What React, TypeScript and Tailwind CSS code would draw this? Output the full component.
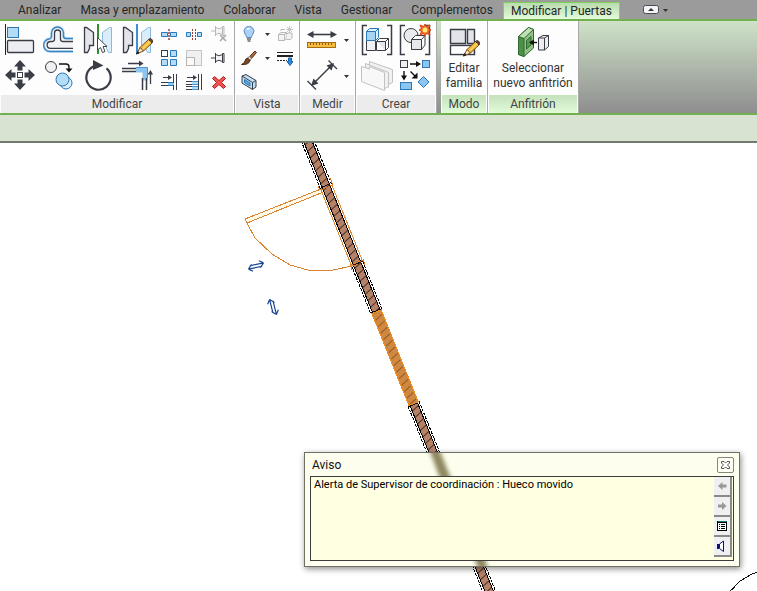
import React from "react";
import clsx from "clsx";

const INK = "#3a3d45";
const BLUE = "#2b78b8";
const SKY = "#b4dcf6";
const GRAY = "#b9b9b9";

const Icon32 = ({ children }: { children: React.ReactNode }) => (
  <svg width="32" height="32" viewBox="0 0 32 32" fill="none" stroke={INK} aria-hidden="true">
    {children}
  </svg>
);

const Icon16 = ({ children }: { children: React.ReactNode }) => (
  <svg width="16" height="16" viewBox="0 0 16 16" fill="none" stroke={INK} aria-hidden="true">
    {children}
  </svg>
);

const Pencil = () => (
  <g stroke="#7a4a1c" strokeWidth="1">
    <path d="M19 23.5 27.5 15.5 31 19 22.5 27Z" fill="#f5bf35" />
    <path d="M27.5 15.5 29 14.5Q32 15 31.5 18L31 19Z" fill="#6b4a3a" stroke="#4a3428" />
    <path d="M21 25.5 29 17.5" stroke="#fde58a" />
    <path d="M19 23.5 15.5 30 22.5 27Z" fill="#fbe6c4" />
    <path d="M15.5 30 16.8 27.5 18 29Z" fill="#222" stroke="#222" />
  </g>
);

const MirrorHalves = ({ axis }: { axis: string }) => (
  <>
    <path d="M2.5 3.5H4.5L11.5 8.5V21.5H7.5V24.5L5.5 28.5H2.5Z" fill="#e3e5ea" strokeWidth="1.3" />
    <path d="M29.5 3.5H27.5L20.5 8.5V21.5H24.5V24.5L26.5 28.5H29.5Z" fill="#d9edfa" stroke="#8ab9dc" />
    <path d="M16 0V30" stroke={axis} strokeWidth="2" />
  </>
);

const Align = () => (
  <Icon32>
    <path d="M1.5 0V31" stroke="#222" />
    <rect x="3.5" y="3.5" width="11" height="10" fill={SKY} stroke={BLUE} />
    <rect x="3.5" y="16.5" width="26" height="12" rx="1" fill="#eceef1" strokeWidth="1.3" />
  </Icon32>
);

const Offset = () => (
  <Icon32>
    <path
      d="M30 14.5H23Q20.5 14.5 20.5 12V9A6 6 0 0 0 8.5 9V12Q8.5 14.5 7 14.8A6.2 6.2 0 0 0 7 27.5H30"
      stroke="#cfe6f7"
      strokeWidth="3"
    />
    <path
      d="M30 14.5H23Q20.5 14.5 20.5 12V9A6 6 0 0 0 8.5 9V12Q8.5 14.5 7 14.8A6.2 6.2 0 0 0 7 27.5H30"
      stroke="#3c83c0"
      strokeWidth="1.4"
    />
    <path
      d="M30 17.5H20Q17.5 17.5 17.5 15V9A3 3 0 0 0 11.5 9V15Q11.5 17.5 9 17.5H7.5A3.4 3.4 0 0 0 7.5 24.3H30"
      fill="#f3f3f5"
      strokeWidth="1.3"
    />
  </Icon32>
);

const MirrorPick = () => (
  <Icon32>
    <MirrorHalves axis="#2f8f35" />
    <path d="M15.5 13.5V26L18.5 23.5 20.5 28.5 23 27.5 21 22.5H25Z" fill="#fff" stroke="#444" />
  </Icon32>
);

const MirrorDraw = () => (
  <Icon32>
    <MirrorHalves axis="#3f8fd6" />
    <Pencil />
  </Icon32>
);

const Move = () => (
  <Icon32>
    <g fill={INK} stroke="none">
      <path d="M16 0 22 6.5H18.5V10.5H13.5V6.5H10Z" />
      <path d="M16 30 22 23.5H18.5V19.5H13.5V23.5H10Z" />
      <path d="M1 15 7.5 9V12.5H11.5V17.5H7.5V21Z" />
      <path d="M31 15 24.5 9V12.5H20.5V17.5H24.5V21Z" />
    </g>
    <rect x="13.5" y="12.5" width="5" height="5" fill="#fff" />
  </Icon32>
);

const Copy = () => (
  <Icon32>
    <circle cx="8" cy="7" r="5.5" fill="#f1f1f3" />
    <path d="M16 4H23Q26 4 26 7V9" stroke="#111" strokeWidth="1.4" />
    <path d="M22.5 8.5H29.5L26 12.5Z" fill="#111" stroke="none" />
    <circle cx="23" cy="23" r="6" fill="#d8effb" stroke={BLUE} />
    <circle cx="19.5" cy="19.5" r="6.5" fill={SKY} stroke={BLUE} />
  </Icon32>
);

const Rotate = () => (
  <Icon32>
    <path d="M24.5 8.3A12.2 12.2 0 1 1 12 6.2" strokeWidth="2.2" />
    <path d="M11 0 21.5 5.5 11 10Z" fill={INK} stroke="none" />
  </Icon32>
);

const Trim = () => (
  <Icon32>
    <path d="M15 7.5H26.5V20.5H21.5V12.5H15Z" fill="#8cc6f0" stroke="none" />
    <path d="M15 7.5H26.5V18" stroke="#4b95cf" />
    <path d="M1 8.5H15M1 11.5H15M21.5 18V30M25.5 18V30" strokeWidth="1.5" />
    <path d="M7 3.5H19M29.5 24V14" strokeWidth="1.3" />
    <path d="M18 0.5 22.5 3.5 18 6.5ZM26.5 14.5 29.5 10 32 14.5Z" fill={INK} stroke="none" />
  </Icon32>
);

const Split = () => (
  <Icon16>
    <path d="M0.5 6.5H6.5V10.5H0.5ZM9.5 6.5H15.5V10.5H9.5Z" fill={SKY} stroke={BLUE} />
    <path d="M8 3V14" stroke="#a33a35" strokeWidth="1.5" strokeDasharray="2 1" />
  </Icon16>
);

const SplitGap = () => (
  <Icon16>
    <path d="M0.5 6.5H4.5V10.5H0.5ZM11.5 6.5H15.5V10.5H11.5Z" fill={SKY} stroke={BLUE} />
    <path d="M6.5 3V14M9.5 3V14" stroke="#a33a35" strokeDasharray="2 1" />
  </Icon16>
);

const PinShape = () => (
  <path
    d="M0 8H4.5M4.5 3V13M4.5 4.5Q8 7 11.5 4.5V11.5Q8 9 4.5 11.5M11.5 3.5H13V12.5H11.5Z"
    fill="#f4f4f4"
  />
);

const Unpin = () => (
  <Icon16>
    <g stroke={GRAY}>
      <g transform="translate(0 -3)">
        <PinShape />
      </g>
      <path d="M9 9 15 15M15 9 9 15" stroke="#a8a8a8" strokeWidth="1.5" />
    </g>
  </Icon16>
);

const Pin = () => (
  <Icon16>
    <PinShape />
  </Icon16>
);

const ArrayIcon = () => (
  <Icon16>
    <rect x="0.5" y="0.5" width="6" height="6" fill="#fff" />
    <path d="M9.5 0.5H15.5V6.5H9.5ZM0.5 9.5H6.5V15.5H0.5ZM9.5 9.5H15.5V15.5H9.5Z" fill={SKY} stroke={BLUE} />
  </Icon16>
);

const Scale = () => (
  <Icon16>
    <rect x="0.5" y="0.5" width="15" height="15" fill="#f0f0f0" stroke="#c4c4c4" />
    <rect x="0.5" y="7.5" width="8" height="8" fill="#fafafa" stroke="#b4b4b4" />
  </Icon16>
);

const ExtendOne = () => (
  <Icon16>
    <path d="M2 3.5H8M0 8.5H7M0 11.5H7M12.5 0V16M15.5 0V16" />
    <path d="M7 1 11 3.5 7 6Z" fill={INK} stroke="none" />
    <path d="M7 8.5H12M7 11.5H12" stroke={BLUE} />
    <path d="M7 10H13" stroke="#8cc6f0" strokeWidth="2" />
  </Icon16>
);

const ExtendMany = () => (
  <Icon16>
    <path d="M1 3.5H8M0 7.5H6M0 10.5H6M0 12.5H6M0 15.5H6M12.5 0V16M15.5 0V16" />
    <path d="M7 1 11 3.5 7 6Z" fill={INK} stroke="none" />
    <path d="M6 7.5H12M6 10.5H12M6 12.5H12M6 15.5H12" stroke="#4b95cf" />
    <path d="M6 9H12M6 14H12" stroke="#b4dcf6" strokeWidth="2" />
  </Icon16>
);

const Delete = () => (
  <Icon16>
    <path
      d="M3.5 2.5 8 6.5 12.5 2.5 14.5 4.5 10.5 8.5 14.5 12.5 12.5 14.5 8 10.5 3.5 14.5 1.5 12.5 5.5 8.5 1.5 4.5Z"
      fill="#ee5350"
      stroke="#b21f1f"
    />
  </Icon16>
);

const Bulb = () => (
  <Icon16>
    <path d="M5.5 11.5Q5.5 9.5 4 8A4.9 4.9 0 1 1 12 8Q10.5 9.5 10.5 11.5Z" fill="#a9d0f7" stroke="#5f8fc4" />
    <path d="M6 3.5Q7 2.5 8.5 3" stroke="#fff" strokeWidth="1.5" />
    <path d="M6 13H10M6.5 15H9.5" stroke="#666" strokeWidth="1.5" />
  </Icon16>
);

const Brush = () => (
  <Icon16>
    <path d="M8.5 6.5 14 1 15.5 2.5 10.5 8.5Z" fill="#a9683a" stroke="#63351c" />
    <path d="M6.5 8 8.5 6.5 10.5 8.5 9 10.5Z" fill="#ddd" stroke="#777" />
    <path d="M6.5 8 9 10.5Q8 15 0.5 14.5Q3.5 13.5 4 11Q4.5 8.5 6.5 8Z" fill="#7b4726" stroke="#4c2a16" />
  </Icon16>
);

const Displace = () => (
  <Icon16>
    <g stroke={GRAY}>
      <path d="M1.5 8.5 4 6.5H9.5V12L7.5 14.5H1.5ZM1.5 8.5H7.5V14.5M7.5 8.5 9.5 6.5" fill="#f3f3f3" />
      <path d="M9.5 8.5 11 7H15V12L13.5 13.5H9.5" fill="#f3f3f3" />
      <path d="M4 5V3.5H8" />
      <path d="M12.5 0V7M9 3.5H16M10 1 15 6M15 1 10 6" stroke="#c6c6c6" />
    </g>
  </Icon16>
);

const LineWork = () => (
  <Icon16>
    <path d="M0 2.5H16" stroke="#222" />
    <path d="M0 6H16" stroke="#222" strokeWidth="2" />
    <path d="M0 10.5H10" stroke="#222" strokeDasharray="2 1" />
    <path d="M11.5 8H14.5V11.5H16L13 15.5 10 11.5H11.5Z" fill="#2a8be0" stroke="#1763ad" />
  </Icon16>
);

const SelectionBox = () => (
  <Icon16>
    <path d="M1 2 5 0.5 15 6.5V13L11.5 15.5 1 9Z" fill="#bfe0f6" />
    <path d="M1 2 11.5 8.5V15.5M11.5 8.5 15 6.5" />
    <path d="M3.5 5.5 9 9V12L3.5 8.5Z" fill="#5fa7df" stroke={BLUE} />
  </Icon16>
);

const Measure = () => (
  <Icon32>
    <path d="M5 10.5H27" strokeWidth="1.6" />
    <path d="M1 10.5 7.5 7V14ZM31 10.5 24.5 7V14Z" fill={INK} stroke="none" />
    <rect x="1.5" y="18.5" width="28" height="5" fill="#f7bd3f" stroke="#a86d12" />
    <path
      d="M4.5 19V21M7.5 19V21M10.5 19V21M13.5 19V21M16.5 19V21M19.5 19V21M22.5 19V21M25.5 19V21"
      stroke="#8a5a10"
    />
  </Icon32>
);

const Dimension = () => (
  <Icon32>
    <path d="M7 24 26 5" strokeWidth="1.4" />
    <path d="M5 26 7.5 18.5 12.5 23.5ZM28 3 25.5 10.5 20.5 5.5Z" fill={INK} stroke="none" />
    <path d="M1.5 21 10 29.5M22.5 0.5 31 9" strokeWidth="1.3" />
  </Icon32>
);

const Brackets = () => (
  <path d="M6 1.5H1.5V30.5H6M26 1.5H30.5V30.5H26" strokeWidth="1.5" />
);

const Assembly = () => (
  <Icon32>
    <Brackets />
    <path d="M5.5 16.5H14.5V26.5H5.5Z" fill="#eef0f3" />
    <path d="M15.5 17.5 18.5 14.5H27.5V23.5L24.5 26.5H15.5Z" fill="#fff" />
    <path d="M15.5 17.5H24.5V26.5M24.5 17.5 27.5 14.5" fill="#e4e6ea" />
    <path d="M5.5 7.5 8.5 4.5H17.5V13.5L14.5 16.5H5.5Z" fill="#e2f3fd" stroke={BLUE} />
    <path d="M5.5 7.5H14.5V16.5H5.5ZM14.5 7.5 17.5 4.5" fill="#a6d4f4" stroke={BLUE} />
  </Icon32>
);

const CreateGroup = () => (
  <Icon32>
    <Brackets />
    <circle cx="12" cy="11.5" r="7" fill="#e9ebee" />
    <path d="M12.5 15.5 16.5 11.5H26V21L22.5 25.5H12.5Z" fill="#fff" />
    <path d="M12.5 15.5H22.5V25.5H12.5ZM22.5 15.5 26 11.5" fill="#e6e8eb" />
    <path
      d="M26 0 27.5 2.5 31 1 29.5 4.5 32 6 29.5 7.5 31 11 27.5 9.5 26 12 24.5 9.5 21 11 22.5 7.5 20 6 22.5 4.5 21 1 24.5 2.5Z"
      fill="#f26b21"
      stroke="#d4471a"
    />
    <circle cx="26" cy="6" r="2.5" fill="#ffe87a" stroke="none" />
  </Icon32>
);

const Parts = () => (
  <Icon32>
    <g stroke="#c2c2c2" fill="#f1f1f1">
      <path d="M8.5 1.5 31.5 9.5V22.5L27 24.5 8.5 16Z" />
      <path d="M4.5 3.5 27.5 12.5V27L23.5 28.5 4.5 20Z" />
      <path d="M0.5 6.5 8.5 9V6.5L23.5 12.5V30.5L0.5 21.5Z" fill="#f8f8f8" />
    </g>
  </Icon32>
);

const Similar = () => (
  <Icon32>
    <rect x="1.5" y="0.5" width="7" height="7" fill="#eee" />
    <rect x="23.5" y="0.5" width="7" height="7" fill="#8cc6f0" stroke={BLUE} />
    <rect x="1.5" y="22.5" width="11" height="7" fill="#8cc6f0" stroke={BLUE} />
    <path d="M24.5 16.5 30 22 24.5 27.5 19 22Z" fill="#8cc6f0" stroke={BLUE} />
    <path d="M11 4H17M5 11V16M11.5 11.5 16 16" stroke="#111" strokeWidth="1.4" />
    <path d="M17 1 22 4 17 7ZM2 15.5H8L5 20.5ZM18.5 12.5V18.5H12.5Z" fill="#111" stroke="none" />
  </Icon32>
);

const EditFamily = () => (
  <Icon32>
    <path
      d="M2.5 3.5H17.5V17.5H2.5ZM19.5 3.5H26.5V17.5H19.5ZM2.5 19.5H26.5V28.5H2.5Z"
      fill="#e2e4e9"
      strokeWidth="1.4"
    />
    <path d="M3.5 20.5H25V27.5H3.5Z" fill="#fff" stroke="none" />
    <Pencil />
  </Icon32>
);

const PickHost = () => (
  <Icon32>
    <path d="M1.5 10.5 11.5 1.5 16.5 3.5V22L7 30.5 1.5 28.5Z" fill="#8fc284" stroke="#2f6b33" />
    <path d="M1.5 10.5 7 12.5V30.5L1.5 28.5Z" fill="#4d9148" stroke="#2f6b33" />
    <path d="M1.5 10.5 11.5 1.5 16.5 3.5 7 12.5Z" fill="#c1e0b5" stroke="#2f6b33" />
    <path d="M9.5 14.5 14 10.5V19L9.5 23Z" fill="#5a9a55" stroke="#2f6b33" />
    <path d="M21.5 12 26 9.5H31.5V20.5L27.5 24H21.5Z" fill="#eceef2" />
    <path d="M21.5 12H27.5V24M27.5 12 31.5 9.5" />
    <path d="M16 16.5H20" stroke="#111" strokeWidth="1.4" />
    <path d="M12 16.5 17 13.5V19.5Z" fill="#111" stroke="none" />
  </Icon32>
);

const Caret = () => (
  <svg width="5" height="3" viewBox="0 0 5 3" aria-hidden="true">
    <path d="M0 0H5L2.5 3Z" fill="#333" />
  </svg>
);

interface ToolProps {
  label: string;
  icon: React.ComponentType;
  className?: string;
}

const Tool = ({ label, icon: Icon, className }: ToolProps) => (
  <button aria-label={label} className={clsx("flex items-center justify-center", className)}>
    <Icon />
  </button>
);

interface PanelProps {
  title: string;
  contextual?: boolean;
  className?: string;
  children: React.ReactNode;
}

const Panel = ({ title, contextual, className, children }: PanelProps) => (
  <section
    className={clsx("flex shrink-0 flex-col border-r border-[#a9a9a9] bg-[#fdfdfd]", className)}
  >
    <div className="h-[74px] pt-px">{children}</div>
    <h2
      className={clsx(
        "mx-px flex h-[18px] items-center justify-center text-[12px] leading-4 text-[#444]",
        contextual ? "bg-linear-to-b from-[#c4e2bc] to-[#e2fbd9]" : "bg-[#ececec]",
      )}
    >
      {title}
    </h2>
  </section>
);

const tabs = ["Analizar", "Masa y emplazamiento", "Colaborar", "Vista", "Gestionar", "Complementos"];

const largeTools: ToolProps[] = [
  { label: "Alinear", icon: Align },
  { label: "Desfase", icon: Offset },
  { label: "Simetría: seleccionar eje", icon: MirrorPick },
  { label: "Simetría: dibujar eje", icon: MirrorDraw },
  { label: "Mover", icon: Move },
  { label: "Copiar", icon: Copy },
  { label: "Rotar", icon: Rotate },
  { label: "Recortar", icon: Trim },
];

const smallTools: ToolProps[] = [
  { label: "Dividir", icon: Split },
  { label: "Dividir con separación", icon: SplitGap },
  { label: "Desbloquear", icon: Unpin },
  { label: "Matriz", icon: ArrayIcon },
  { label: "Escala", icon: Scale },
  { label: "Bloquear", icon: Pin },
  { label: "Alargar uno", icon: ExtendOne },
  { label: "Alargar varios", icon: ExtendMany },
  { label: "Borrar", icon: Delete },
];

const createTools: ToolProps[] = [
  { label: "Crear montaje", icon: Assembly },
  { label: "Crear grupo", icon: CreateGroup },
  { label: "Crear piezas", icon: Parts },
  { label: "Crear similar", icon: Similar },
];

const TabBar = () => (
  <nav className="flex h-[19px] items-end gap-px bg-[#9b9b9b] pl-[9px] text-[12px] leading-[18px] text-[#262626]">
    {tabs.map((tab) => (
      <button key={tab} className="shrink-0 px-[9px]">
        {tab}
      </button>
    ))}
    <button className="shrink-0 border border-b-0 border-[#7fd35a] bg-linear-to-b from-[#b9dcae] to-[#e3fbd9] px-[7px] leading-4">
      Modificar | Puertas
    </button>
    <button aria-label="Minimizar cinta" className="ml-[22px] flex h-[18px] items-center gap-1">
      <svg width="16" height="10" viewBox="0 0 16 10" aria-hidden="true">
        <rect x="0.5" y="0.5" width="15" height="8" rx="2" fill="#f4f4f6" stroke="#4a4a55" />
        <path d="M5 6H11L8 3Z" fill="#333" />
      </svg>
      <Caret />
    </button>
  </nav>
);

const Ribbon = () => (
  <div className="flex border-t-2 border-b-2 border-[#73b04f] bg-linear-to-b from-[#cfe3c8] to-[#8e8e8e]">
    <Panel title="Modificar" className="w-[235px]">
      <div className="flex">
        <div className="grid grid-cols-[repeat(4,39px)]">
          {largeTools.map((tool) => (
            <Tool key={tool.label} {...tool} className="h-9" />
          ))}
        </div>
        <div className="grid grid-cols-[repeat(3,25px)]">
          {smallTools.map((tool) => (
            <Tool key={tool.label} {...tool} className="h-6" />
          ))}
        </div>
      </div>
    </Panel>
    <Panel title="Vista" className="w-[65px]">
      <div className="grid grid-cols-[16px_20px_16px] pl-[6px]">
        <Tool label="Ocultar en vista" icon={Bulb} className="h-6" />
        <Tool label="Opciones de ocultar" icon={Caret} />
        <Tool label="Desplazar elementos" icon={Displace} />
        <Tool label="Modificar gráficos" icon={Brush} className="h-6" />
        <Tool label="Opciones de gráficos" icon={Caret} />
        <Tool label="Tipo de línea" icon={LineWork} />
        <Tool label="Cuadro de selección" icon={SelectionBox} className="h-6" />
      </div>
    </Panel>
    <Panel title="Medir" className="w-14">
      <div className="grid grid-cols-[32px_16px] pl-[6px]">
        <Tool label="Medir distancia" icon={Measure} className="h-9" />
        <Tool label="Opciones de medir" icon={Caret} />
        <Tool label="Cota alineada" icon={Dimension} className="h-9" />
        <Tool label="Opciones de cota" icon={Caret} />
      </div>
    </Panel>
    <Panel title="Crear" className="mr-1 w-[81px]">
      <div className="grid grid-cols-[repeat(2,38px)] justify-center">
        {createTools.map((tool) => (
          <Tool key={tool.label} {...tool} className="h-9" />
        ))}
      </div>
    </Panel>
    <Panel title="Modo" contextual className="w-[47px]">
      <button className="flex w-full flex-col items-center text-[12px] leading-[15px] text-[#333]">
        <span className="flex h-[39px] items-center">
          <EditFamily />
        </span>
        <span>Editar</span>
        <span>familia</span>
      </button>
    </Panel>
    <Panel title="Anfitrión" contextual className="w-[91px]">
      <button className="flex w-full flex-col items-center text-[12px] leading-[15px] whitespace-nowrap text-[#333]">
        <span className="flex h-[39px] items-center">
          <PickHost />
        </span>
        <span>Seleccionar</span>
        <span>nuevo anfitrión</span>
      </button>
    </Panel>
  </div>
);

// Wall is drawn along its own axis, then turned to the plan angle
const hatch = Array.from({ length: 72 }, (_, i) => i * 7 - 8);

const FlipArrows = ({ transform }: { transform: string }) => (
  <g transform={transform} stroke="#1c4596" strokeWidth="1.2">
    <path d="M-8 1.5H6M8 -1.5H-6M-8 1.5 -4 -2.5M-8 1.5 -4 4.5M8 -1.5 4 2.5M8 -1.5 4 -4.5" />
  </g>
);

const Drawing = () => (
  <svg className="absolute inset-0 h-full w-full" fill="none" role="img" aria-label="Plano">
    <g transform="translate(308.5 0) rotate(-21.95)">
      <rect x="-4" y="-8" width="8" height="500" fill="#b58268" />
      <rect x="-5" y="181" width="10" height="100" fill="#cf8842" />
      {hatch.map((y) => (
        <path
          key={y}
          d={`M-4 ${y + 1.5}L4 ${y - 1.5}`}
          stroke={y > 182 && y < 280 ? "#96591f" : "#4a3024"}
        />
      ))}
      <g shapeRendering="crispEdges">
        <path d="M-4 -8V181M4 -8V181M-4 281V492M4 281V492" stroke="#000" />
        <path
          d="M-6 -8V48M6 -8V48M-6 130V181M6 130V181M-6 281V492M6 281V492"
          stroke="#000"
          strokeDasharray="3 1"
        />
        <path d="M-6 48V130M6 48V130" stroke="#e08a35" />
        <path d="M-7 44V48H7V41H5M-7 134V129H7V134" stroke="#e07c25" />
        <path d="M-5 46H5M-5 130H5M-5 181H5M-5 282H5" stroke="#111" />
        <rect x="-5" y="182" width="10" height="99" stroke="#ee8c22" />
      </g>
    </g>
    <g shapeRendering="crispEdges">
      <path d="M321 46 245 76 247 80 321 50Z" fill="#fffbe8" stroke="#d9822f" />
      <path d="M247 80 255 95 272 111 290 122 308 127H333L357 122" stroke="#d9822f" />
      <path d="M730 448 740 438 752 431 758 429M730 448 735 444" stroke="#111" />
    </g>
    <FlipArrows transform="translate(256 123) rotate(-12)" />
    <FlipArrows transform="translate(273 164) rotate(76)" />
  </svg>
);

const sideButtons = [
  {
    label: "Aviso anterior",
    icon: <path d="M4 8 8.5 4V6.5H12.5V9.5H8.5V12Z" fill="#999" />,
  },
  {
    label: "Aviso siguiente",
    icon: <path d="M12.5 8 8 4V6.5H4V9.5H8V12Z" fill="#999" />,
  },
  {
    label: "Ampliar",
    icon: (
      <g shapeRendering="crispEdges">
        <rect x="3" y="3" width="10" height="10" fill="#000" />
        <rect x="4" y="5" width="8" height="7" fill="#fff" />
        <rect x="4" y="3" width="9" height="1" fill="#187a80" />
        <path d="M5 6H6V7H5ZM7 6H11V7H7ZM5 8H6V9H5ZM7 8H11V9H7ZM5 10H6V11H5ZM7 10H11V11H7Z" fill="#000" />
      </g>
    ),
  },
  {
    label: "Sonido",
    icon: (
      <g>
        <path d="M3 6H5V11H3Z" fill="#11117a" />
        <path d="M5.5 6 9.5 3V13.5L5.5 10.5Z" fill="#fff" stroke="#11117a" />
      </g>
    ),
  },
];

const WarningDialog = () => (
  <div
    role="dialog"
    aria-labelledby="aviso"
    className="absolute top-[309px] left-[304px] w-[436px] border border-[#6f7165] bg-[#fdfeed] px-[5px] pb-[5px] shadow-[1px_2px_6px_rgba(0,0,0,0.45)]"
  >
    <svg className="absolute inset-0 h-full w-full overflow-hidden" aria-hidden="true">
      <g className="blur-[2px]" fill="#8e8860">
        <path d="M124 -4H134L147 28H136Z" />
        <path d="M168 100H178L183 116H173Z" />
      </g>
    </svg>
    <header className="relative flex h-[23px] items-center justify-between">
      <h1 id="aviso" className="pl-0.5 text-[12px] leading-4 text-[#111]">
        Aviso
      </h1>
      <button
        aria-label="Cerrar"
        className="flex h-4 w-[17px] items-center justify-center rounded-xs border border-[#85877c] bg-[#fffff4]"
      >
        <svg width="9" height="8" viewBox="0 0 9 8" aria-hidden="true">
          <path
            d="M0.5 0.5H3L4.5 2 6 0.5H8.5V2L6.5 4 8.5 6V7.5H6L4.5 6 3 7.5H0.5V6L2.5 4 0.5 2Z"
            fill="#fff"
            stroke="#555"
          />
        </svg>
      </button>
    </header>
    <div className="relative flex h-[85px] justify-between border border-[#3d3d3d] bg-[#ffffe1] pr-px pb-px pl-[3px]">
      <p className="text-[11px] leading-4 whitespace-nowrap text-black">
        Alerta de Supervisor de coordinación : Hueco movido
      </p>
      <div className="flex w-[18px] flex-col">
        {sideButtons.map(({ label, icon }) => (
          <button
            key={label}
            aria-label={label}
            className="flex h-5 items-center justify-center border-r-2 border-b-2 border-[#8a8a8a] bg-[#f0f0f0]"
          >
            <svg width="16" height="16" viewBox="0 0 16 16" aria-hidden="true">
              {icon}
            </svg>
          </button>
        ))}
      </div>
    </div>
  </div>
);

export default function App() {
  return (
    <div className="flex min-h-screen flex-col bg-white font-[Roboto,sans-serif]">
      <TabBar />
      <Ribbon />
      <div className="h-7 border-b-2 border-[#727a70] bg-[#d8e3d2]" />
      <main className="relative flex-1 overflow-hidden">
        <Drawing />
        <WarningDialog />
      </main>
    </div>
  );
}
